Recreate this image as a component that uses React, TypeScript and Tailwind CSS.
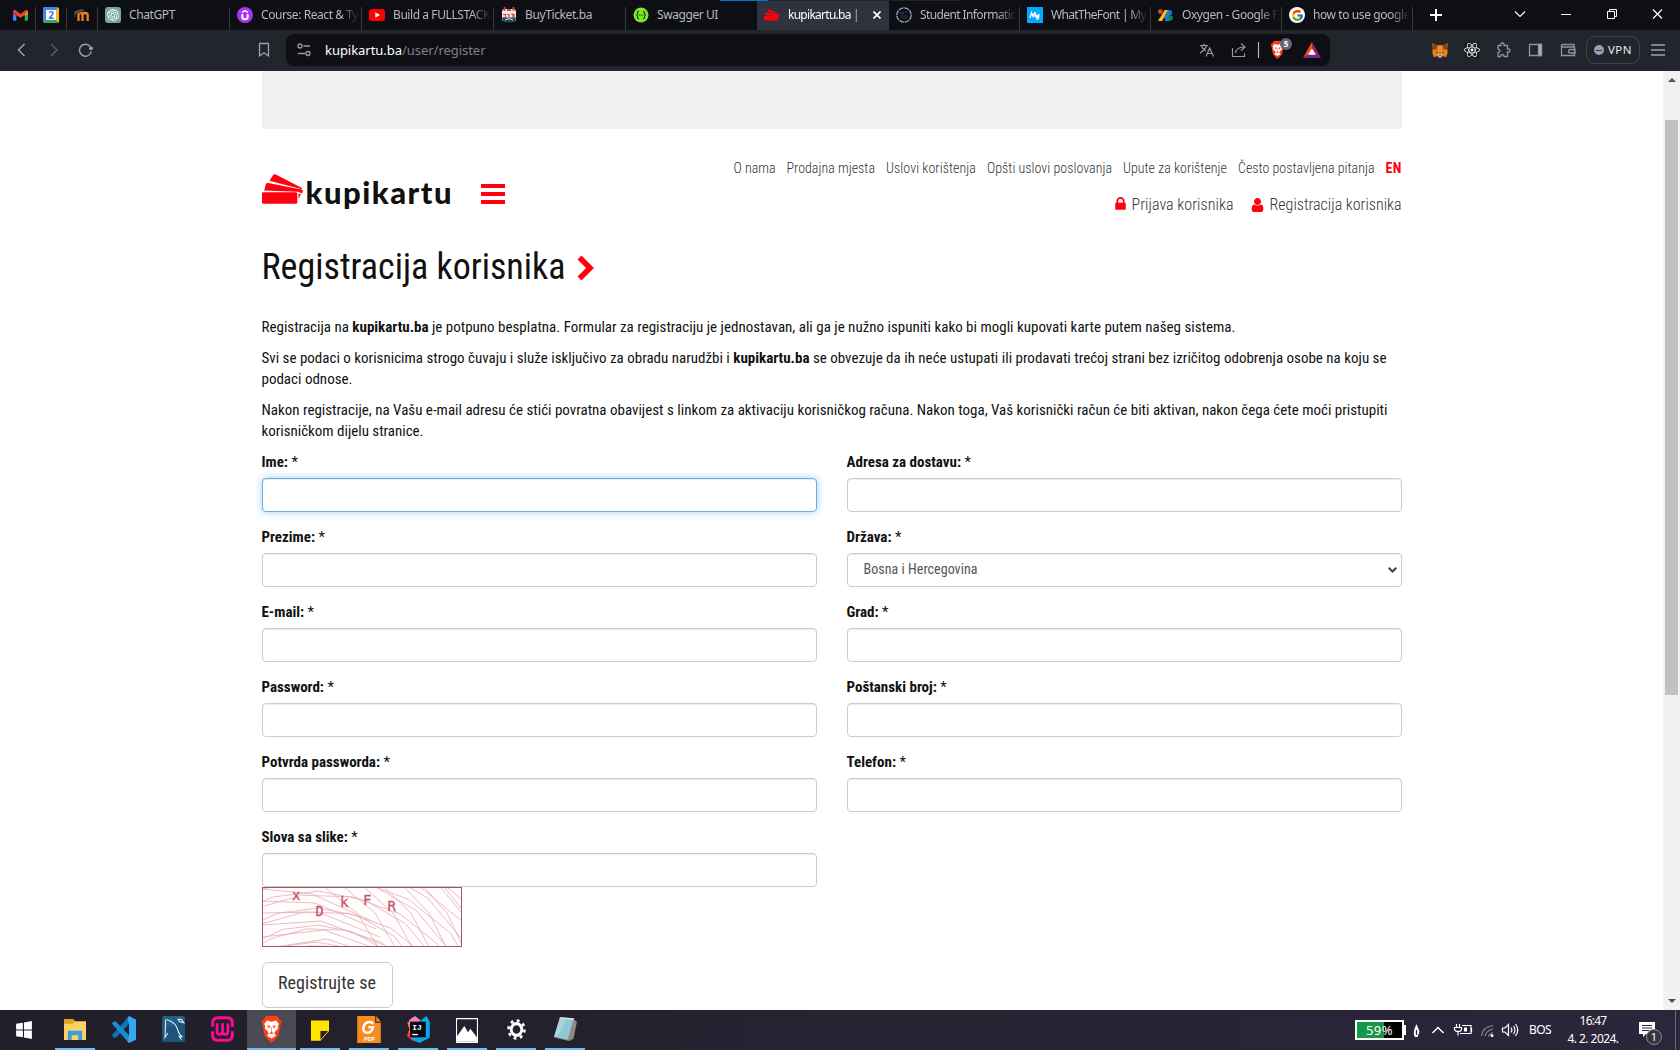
import React, { useLayoutEffect, useRef, useState } from "react";
import { SiOpenai } from "react-icons/si";
import { FcGoogle } from "react-icons/fc";
import { FaReact } from "react-icons/fa";

const UI = "font-['Noto_Sans','Open_Sans',sans-serif]";
const PAGE = "font-['Roboto_Condensed','Roboto',sans-serif] [font-stretch:75%]";

/** Single line of text whose tracking is adjusted so that it spans `w` pixels. */
function Fit({ w, className = "", children }: { w: number; className?: string; children: React.ReactNode }) {
  const ref = useRef<HTMLSpanElement>(null);
  const [ls, setLs] = useState(0);
  useLayoutEffect(() => {
    const el = ref.current!;
    const n = (el.textContent || "").length;
    setLs((w - el.getBoundingClientRect().width) / n);
  }, []);
  return (
    <span ref={ref} className={"inline-block whitespace-pre " + className} style={{ letterSpacing: ls }}>
      {children}
    </span>
  );
}

function TicketMark({ className = "" }: { className?: string }) {
  return (
    <svg viewBox="0 0 41 31" className={className} fill="#ff0011">
      <path d="M11 1.200q1-1.600 2.800-.8L39 13.400q1.200.7.8 1.800L9.200 7.200 7.500 6.800z" />
      <path d="M3.800 10.300q.5-1.700 2.300-1.200L39.500 15.400q1.700.6 1.300 2L40 19.500l-4-1.700L2.200 16.400z" />
      <path d="M0 19.500q0-1.200 1.300-1.200h32.500q1.500.1 1.500 1.500v8.400q0 1.600-1.600 1.600H1.500Q0 29.800 0 28.300z" />
      <path d="M36.500 19.500l2.300.8-2.200 5z" />
    </svg>
  );
}

function BraveLion({ className = "" }: { className?: string }) {
  return (
    <svg viewBox="0 0 18 24" className={className}>
      <path d="M4 0h10l2 3 2 1-1 4-2 10-6 6-6-6L1 8 0 4l2-1z" fill="#fa3f17" />
      <path d="M9 5l4-1 2.500 3-1 2 .5 2-3 3-.5 1.500 1.500 2L9 20l-4-2.500 1.500-2L6 14l-3-3 .5-2-1-2L5 4z" fill="#fff" />
      <path d="M5.500 8.500l2.500 1-1.500 1zM12.500 8.500l-2.500 1 1.500 1zM9 10v4l-1.500 1.500h3L9 14" fill="#fa3f17" stroke="#fa3f17" strokeWidth=".5" />
    </svg>
  );
}

function Gmail() {
  return (
    <svg viewBox="0 0 16 12" className="w-[15px] h-[12px]">
      <path d="M0 2v9q0 1 1 1h2.500V4z" fill="#4285f4" />
      <path d="M16 2v9q0 1-1 1h-2.500V4z" fill="#34a853" />
      <path d="M0 1.500L3.500 4v3L0 4.500z" fill="#c5221f" />
      <path d="M16 1.500L12.500 4v3L16 4.500z" fill="#fbbc04" />
      <path d="M0 2Q1 0 2.500.7L8 5l5.500-4.300Q15 0 16 2l-3.500 4L8 9 3.500 6z" fill="#ea4335" />
    </svg>
  );
}

function Calendar() {
  return (
    <span className="w-4 h-4 bg-[#fbbc04] border-t-[3px] border-t-[#4285f4] border-l-[3px] border-l-[#4285f4] border-b-[3px] border-b-[#34a853] border-r-[3px] border-r-[#fbbc04] rounded-[2px] flex">
      <span className={"bg-white flex-1 text-[10px] leading-[10px] font-bold text-[#3b78e7] text-center " + UI}>2</span>
    </span>
  );
}

function Moodle() {
  return (
    <svg viewBox="0 0 17 14" className="w-[17px] h-[14px]" fill="none">
      <path d="M4.500 13V7q0-2 2-2t2 2v6M8.500 7q0-2 2.500-2t2.700 2.200V13" stroke="#f47f20" strokeWidth="2.300" />
      <path d="M0 3.500L7 1l4 1-5 3-5 1.500z" fill="#4d4a48" />
      <path d="M1 4v5" stroke="#4d4a48" />
    </svg>
  );
}

function OpenAi() {
  return (
    <span className="w-4 h-4 rounded-[3px] bg-[#75a99c] text-white flex items-center justify-center">
      <SiOpenai size={12} />
    </span>
  );
}

function Udemy() {
  return (
    <svg viewBox="0 0 16 16" className="w-4 h-4">
      <circle cx="8" cy="8" r="8" fill="#a435f0" />
      <path d="M5.300 7v3q0 2.300 2.700 2.300t2.700-2.300V7" stroke="#fff" strokeWidth="1.900" fill="none" />
      <path d="M5 5.300L8 3.500l3 1.800" stroke="#fff" strokeWidth="1.500" fill="none" />
    </svg>
  );
}

function YouTube() {
  return (
    <svg viewBox="0 0 16 12" className="w-4 h-3">
      <rect width="16" height="12" rx="3" fill="#f00" />
      <path d="M6.300 3.300v5.400L11 6z" fill="#fff" />
    </svg>
  );
}

function BuyTicket() {
  return (
    <svg viewBox="0 0 16 16" className="w-4 h-4">
      <rect x="1" y="2" width="14" height="12.500" rx="3" fill="#f3e9e6" />
      <path d="M1 10.500h14l-1 3.500q-6 3-12 0z" fill="#174763" />
      <path d="M3.500 0v4M12.500 0v4M6 3h4" stroke="#d8443a" strokeWidth="1.800" />
      <path d="M2 7.500h2.500v3H2M6 7.500h2v3M10 7h2v3.500M13 7v3" stroke="#d8443a" strokeWidth="1.200" fill="none" />
      <path d="M4 13q4-3 8 0" stroke="#f3e9e6" fill="none" />
    </svg>
  );
}

function Swagger() {
  return (
    <svg viewBox="0 0 16 16" className="w-4 h-4">
      <circle cx="8" cy="8" r="7.500" fill="#7ee529" />
      <path d="M6 4.200q-1.600 0-1.400 1.800 0 1.800-1.300 2 1.300.2 1.300 2-.2 1.800 1.400 1.800M10 4.200q1.600 0 1.400 1.800 0 1.800 1.300 2-1.300.2-1.300 2 .2 1.800-1.400 1.800" stroke="#1d3d12" strokeWidth="1.100" fill="none" />
      <path d="M5.800 8h4.600" stroke="#1d3d12" strokeWidth="1.200" strokeDasharray="1.200 .5" />
    </svg>
  );
}

function StudentInfo() {
  return (
    <svg viewBox="0 0 16 16" className="w-4 h-4" fill="none">
      <circle cx="8" cy="8" r="7.200" stroke="#a3a6aa" strokeWidth="1.300" strokeDasharray="4.900 .75" />
      <path d="M4.500 5v2M7 5v2M9 5h2" stroke="#1d4c86" strokeWidth="1.200" />
      <path d="M4 9h8M5 11h6" stroke="#24425f" strokeWidth=".8" />
    </svg>
  );
}

function WhatTheFont() {
  return (
    <svg viewBox="0 0 16 16" className="w-4 h-4">
      <rect width="16" height="16" fill="#00a8ff" />
      <path d="M3 11L4.500 5.500 6 9.500 8 5l.3 5.500M9.500 7.500l.3 3 2.200-3.300-.5 3.800q-.5 1.500-1.800 1.200" stroke="#fff" strokeWidth="1.300" fill="none" />
    </svg>
  );
}

function GoogleFonts() {
  return (
    <svg viewBox="0 0 16 13" className="w-4 h-[13px]">
      <circle cx="2.300" cy="2.600" r="2.300" fill="#ea4335" />
      <path d="M6.500 1H10v2L4 12H0z" fill="#fbbc04" />
      <path d="M10 1h1v11h-4V6z" fill="#1a73e8" />
      <path d="M11 1q3.200 0 3.200 2.600T11 6.300z" fill="#1a73e8" />
      <path d="M11 6q4 0 4 3t-4 3z" fill="#188038" />
    </svg>
  );
}

function Tab({ icon, text, w, active = false, fade = false, className }: { icon: React.ReactNode; text: string; w: number; active?: boolean; fade?: boolean; className: string }) {
  return (
    <div className={"relative shrink-0 flex items-center h-[30px] pl-[7px] " + className + (active ? " bg-[#2f333d]" : "")}>
      <span className="w-4 h-4 flex items-center justify-center shrink-0">{icon}</span>
      <span className={"ml-2 flex-1 overflow-hidden h-[18px] text-[12px] leading-[18px] " + UI + (active ? " text-white" : " text-[#b8b9bb]") + (fade ? " [mask-image:linear-gradient(to_right,#000_80%,transparent_100%)]" : "")}>
        <Fit w={w}>{text}</Fit>
      </span>
      {active ? (
        <svg viewBox="0 0 8 8" className="w-2 h-2 mr-2 ml-2 shrink-0" stroke="#fff" strokeWidth="1.700"><path d="M.5.5l7 7M7.500.5l-7 7" /></svg>
      ) : (
        <span className="w-0.5 shrink-0" />
      )}
    </div>
  );
}

const Sep = () => <span className="w-px h-[23px] mt-[7px] bg-[#38393e] shrink-0" />;

function TabStrip() {
  return (
    <div className="relative flex h-[30px] bg-[#0e0f14]">
      <div className="absolute left-[720px] top-0 w-[48px] h-px bg-[#0078d7] z-10" />
      <div className="absolute left-[768px] top-0 w-[193px] h-px bg-[#222325] z-10" />
      <span className="w-[35px] pl-[5px] flex items-center justify-center shrink-0"><Gmail /></span><Sep />
      <span className="w-[30px] flex items-center justify-center shrink-0"><Calendar /></span><Sep />
      <span className="w-[30px] flex items-center justify-center shrink-0"><Moodle /></span><Sep />
      <Tab className="w-[131px]" icon={<OpenAi />} text="ChatGPT" w={46} /><Sep />
      <Tab className="w-[131px]" icon={<Udemy />} text="Course: React & Ty" w={97} fade /><Sep />
      <Tab className="w-[131px]" icon={<YouTube />} text="Build a FULLSTACK" w={97} fade /><Sep />
      <Tab className="w-[131px]" icon={<BuyTicket />} text="BuyTicket.ba" w={67} /><Sep />
      <Tab className="w-[131px]" icon={<Swagger />} text="Swagger UI" w={61} />
      <Tab className="w-[132px]" icon={<TicketMark className="w-4 h-3" />} text="kupikartu.ba |" w={71} active fade />
      <Tab className="w-[130px]" icon={<StudentInfo />} text="Student Informatio" w={97} fade /><Sep />
      <Tab className="w-[130px]" icon={<WhatTheFont />} text="WhatTheFont | My" w={95} fade /><Sep />
      <Tab className="w-[130px]" icon={<GoogleFonts />} text="Oxygen - Google F" w={96} fade /><Sep />
      <Tab className="w-[130px]" icon={<span className="w-4 h-4 rounded-full bg-white flex items-center justify-center"><FcGoogle size={13} /></span>} text="how to use google" w={97} fade /><Sep />
      <div className="flex-1 flex items-center justify-end">
        <svg viewBox="0 0 268 30" className="w-[268px] h-[30px] shrink-0" fill="none" stroke="#fff">
          <path d="M17 15h12M23 9v12" strokeWidth="2" />
          <path d="M102 11.500l5 5 5-5" strokeWidth="1.100" />
          <path d="M148 14.500h10" />
          <path d="M194.500 11.500h7v7h-7zM196.500 11.500v-2h7v7h-2" />
          <path d="M240 9.500l9 9M249 9.500l-9 9" strokeWidth="1.200" />
        </svg>
      </div>
    </div>
  );
}

function MetaMask() {
  return (
    <svg viewBox="0 0 16 15" className="w-4 h-[15px]">
      <path d="M0 0l5.500 2.500h5L16 0l-.8 6 .5 3.500-1.400 4.500-4-.8L8.500 15h-1l-1.800-1.800-4 .8L.3 9.500.8 6z" fill="#e8821e" />
      <path d="M0 0l5.500 2.500L4 7 .8 6zM16 0l-5.500 2.500L12 7l3.200-1z" fill="#8a4018" />
      <path d="M5.500 2.500h5L9.500 9h-3z" fill="#f6891f" />
      <path d="M5.700 12l2.300-.7 2.300.7-1.300 2.200H7z" fill="#dcd3cb" />
      <path d="M4 8.500l2 .8-2 .5zM12 8.500l-2 .8 2 .5zM7 12.200h2v1H7z" fill="#233447" />
    </svg>
  );
}

function Toolbar() {
  return (
    <div className="flex items-center h-[41px] bg-[#22252c] pt-px">
      <svg viewBox="0 0 286 40" className="w-[286px] h-10 shrink-0" fill="none" stroke="#9ba2ac" strokeWidth="1.300">
        <path d="M24.500 13l-6 6 6 6" strokeWidth="1.500" />
        <path d="M51 13l6 6-6 6" stroke="#555a63" strokeWidth="1.500" />
        <path d="M90.300 15.600a6 6 0 1 0 1 5" strokeWidth="1.500" />
        <circle cx="91" cy="17.300" r="1.900" fill="#9ba2ac" stroke="none" />
        <path d="M259.500 12.500h9v12.500l-4.500-3.300-4.500 3.300z" />
      </svg>
      <div className="w-[1044px] h-8 bg-[#0e0f14] rounded-lg flex items-center mb-[3px] shrink-0">
        <svg viewBox="0 0 39 32" className="w-[39px] h-8" fill="none" stroke="#9a9ca0" strokeWidth="1.300">
          <circle cx="14" cy="12" r="2" /><path d="M17.500 12H24M12 19.500h7" /><circle cx="22" cy="19.500" r="2" />
        </svg>
        <span className={"flex-1 text-[13px] leading-5 text-[#7f8185] " + UI}>
          <Fit w={160.500}><span className="text-white">kupikartu.ba</span>/user/register</Fit>
        </span>
        <svg viewBox="0 0 140 32" className="w-[140px] h-8" fill="none" stroke="#989a9f" strokeWidth="1.200">
          <path d="M9 11.500h8M13 9.500v2M15.500 11.500q-1 4-6.500 7.500M10.500 12q1 3 4.500 5M15 22.500l3.700-8.500 3.800 8.500M16.300 19.500h5" />
          <path d="M41.500 14v8.500h12v-3M44.500 19q.3-5.500 8.500-6M50 9.500l4 3.500-4 3.500" />
          <path d="M67.500 8v16" stroke="#b5b6b9" />
        </svg>
        <span className="-ml-[61px] flex items-center">
          <span className="relative w-[15px] h-[18px]">
            <BraveLion className="w-[15px] h-[18px]" />
            <span className={"absolute -top-[3px] left-[10px] w-3 h-3 rounded-full bg-[#646876] text-[8px] leading-3 font-bold text-white text-center " + UI}>5</span>
          </span>
          <svg viewBox="0 0 18 16" className="w-[18px] h-4 ml-[18px] mr-[9px]">
            <path d="M9 0L0 16l9-5.500z" fill="#ff4724" /><path d="M9 0l9 16-9-5.500z" fill="#9e1f63" /><path d="M0 16h18l-9-5.500z" fill="#662d91" /><path d="M9 6.500l-4 6.200h8z" fill="#fff" />
          </svg>
        </span>
      </div>
      <div className="flex items-center mb-[2px] ml-[102px]">
        <MetaMask />
        <span className="ml-4 w-4 h-4 bg-[#1d1f23] text-white"><FaReact size={16} /></span>
        <svg viewBox="0 0 88 20" className="w-[88px] h-5 ml-3" fill="none" stroke="#8d949e" strokeWidth="1.300">
          <path d="M6 5.500h3q-.5-2.500 1.500-2.500T12 5.500h3.500v3.500q2.500-.5 2.500 1.500t-2.500 1.500v4.500H12q0-2-1.700-2t-1.800 2H6v-4q2 0 2-1.700T6 9z" />
          <path d="M37.500 4.500h12v11h-12z" /><path d="M46.500 4.500h3v11h-3z" fill="#b3b9c2" />
          <path d="M82 7V4.500H70q-1.200.8 0 2.500h12.500v8.500h-13V5.500M83 9.500h-5q-1.500 0-1.500 1.700T78 13h5z" />
        </svg>
        <span className={"ml-[6px] w-[54px] h-7 rounded-[9px] border border-[#3f434d] flex items-center pl-[7px] text-[11.500px] text-[#e8e8ec] " + UI}>
          <span className="w-[10px] h-[10px] rounded-full bg-[#9a9bb8] flex items-center justify-center mr-1"><span className="w-1.5 h-px bg-[#333545]" /></span>
          <Fit w={24}>VPN</Fit>
        </span>
        <svg viewBox="0 0 14 12" className="w-[14px] h-3 ml-[11px]" stroke="#9ba2ac" strokeWidth="1.300"><path d="M0 1h14M0 6h14M0 11h14" /></svg>
      </div>
    </div>
  );
}

function Field({ label, focus = false, children }: { label: string; focus?: boolean; children?: React.ReactNode }) {
  return (
    <div className="h-[75px]">
      <div className="h-[26px] text-[15px] leading-[21px] text-[#111]"><b>{label}:</b> *</div>
      <div className={"h-[34px] rounded border bg-white flex items-center justify-between " + (focus ? "border-[#66afe9] shadow-[inset_0_1px_1px_rgba(0,0,0,.075),0_0_8px_rgba(102,175,233,.6)]" : "border-[#ccc] shadow-[inset_0_1px_1px_rgba(0,0,0,.075)]")}>
        {children}
      </div>
    </div>
  );
}

function Captcha() {
  const lines: string[] = [];
  /* Polygonal arcs around a few centres below the picture. */
  const arc = (cx: number, cy: number, rx: number, ry: number, start: number) => {
    let d = "";
    for (let k = 0; k < 9; k++) {
      const a = ((start + k * 20) * Math.PI) / 180;
      d += (k ? "L" : "M") + (cx - rx * Math.cos(a)).toFixed(1) + " " + (cy - ry * Math.sin(a)).toFixed(1);
    }
    return d;
  };
  for (let i = 0; i < 10; i++) {
    lines.push(arc(52, 130, 85 + i * 17, 75 + i * 17, 12));
    lines.push(arc(60, 136, 95 + i * 17, 78 + i * 17, 2));
  }
  for (let i = 0; i < 7; i++) lines.push(`M0 ${2 + i * 12}L${50 + i * 3} ${7 + i * 9}L${110 + i * 4} ${34 + i * 8}`);
  for (let i = 0; i < 7; i++) lines.push(`M${62 + i * 20} 0L${95 + i * 18} 26L${116 + i * 17} 60`);
  return (
    <svg viewBox="0 0 200 60" className="block w-[200px] h-[60px]" fill="none">
      <rect width="200" height="60" fill="#fffdfd" />
      <path d={lines.join("")} stroke="#e6acb4" strokeWidth=".8" />
      <rect x=".5" y=".5" width="199" height="59" stroke="#965a60" />
      <g fill="#c25768" fontFamily="DejaVu Sans Mono, monospace" fontSize="14" stroke="#c25768" strokeWidth=".3">
        <text x="30" y="13">x</text><text x="53.500" y="29" fontSize="13.500">D</text><text x="78" y="20">k</text><text x="101" y="18">F</text><text x="125.500" y="24">R</text>
      </g>
    </svg>
  );
}

function Page() {
  return (
    <div className={"relative h-[939px] bg-white text-[#111] overflow-hidden " + PAGE}>
      <div className="w-[1140px] ml-[261.5px]">
        <div className="h-[58px] bg-[#f1f1f1]" />
        <div className="h-[92px] flex justify-between">
          <div className="flex pt-[45px]">
            <TicketMark className="w-[41px] h-[31px]" />
            <span className="ml-[3px] w-[147px] text-[31px] leading-[36px] font-black font-['Lato',sans-serif] [font-stretch:100%]"><Fit w={147.500}>kupikartu</Fit></span>
            <svg viewBox="0 0 24 20" className="w-6 h-5 ml-7 mt-[10px]" fill="#ff0011"><path d="M0 0h24v4H0zM0 8h24v4H0zM0 16h24v4H0z" /></svg>
          </div>
          <div className="pt-[29px] text-right text-[#333] font-light">
            <div className="flex justify-end gap-[11px] text-[14px] leading-5">
              <Fit w={42}>O nama</Fit><Fit w={88.500}>Prodajna mjesta</Fit><Fit w={90}>Uslovi korištenja</Fit><Fit w={125}>Opšti uslovi poslovanja</Fit><Fit w={104}>Upute za korištenje</Fit><Fit w={136.500}>Često postavljena pitanja</Fit>
              <Fit w={16} className="font-bold text-[#ff0011]">EN</Fit>
            </div>
            <div className="flex justify-end items-center mt-[16px] text-[16px] leading-[22px]">
              <svg viewBox="320 128 1152 1536" className="w-[11px] h-[14px] mr-[5px] mb-0.5" fill="#ff0011"><path d="M640 768h512v-192q0-106-75-181t-181-75-181 75-75 181v192zm832 96v576q0 40-28 68t-68 28h-960q-40 0-68-28t-28-68v-576q0-40 28-68t68-28h32v-192q0-184 132-316t316-132 316 132 132 316v192h32q40 0 68 28t28 68z" /></svg>
              <Fit w={102}>Prijava korisnika</Fit>
              <svg viewBox="256 128 1280 1536" className="w-[13px] h-[14px] ml-[18px] mr-[5px]" fill="#ff0011"><path d="M1536 1399q0 109-62.500 187t-150.500 78h-854q-88 0-150.500-78t-62.500-187q0-85 8.500-160.500t31.500-152 58.500-131 94-89 134.500-34.500q131 128 313 128t313-128q76 0 134.500 34.500t94 89 58.500 131 31.500 152 8.500 160.500zm-256-887q0 159-112.500 271.500t-271.500 112.500-271.500-112.500-112.500-271.500 112.500-271.500 271.500-112.500 271.500 112.500 112.500 271.500z" /></svg>
              <Fit w={132}>Registracija korisnika</Fit>
            </div>
          </div>
        </div>
        <h1 className="mt-[26px] flex items-center text-[36px] leading-[40px]">
          <Fit w={304}>Registracija korisnika</Fit>
          <svg viewBox="0 0 17 26" className="w-[17px] h-[26px] ml-[11px] mt-[1px]" fill="none" stroke="#ff0011" strokeWidth="5.600"><path d="M2.500 2.500L13 13 2.500 23.500" /></svg>
        </h1>
        <div className="mt-[30px] text-[15px] leading-[21px]">
          <p className="mb-[10px]"><Fit w={974}>Registracija na <b>kupikartu.ba</b> je potpuno besplatna. Formular za registraciju je jednostavan, ali ga je nužno ispuniti kako bi mogli kupovati karte putem našeg sistema.</Fit></p>
          <p className="mb-[10px]"><Fit w={1125}>Svi se podaci o korisnicima strogo čuvaju i služe isključivo za obradu narudžbi i <b>kupikartu.ba</b> se obvezuje da ih neće ustupati ili prodavati trećoj strani bez izričitog odobrenja osobe na koju se</Fit><br /><Fit w={91}>podaci odnose.</Fit></p>
          <p className="mb-[10px]"><Fit w={1126}>Nakon registracije, na Vašu e-mail adresu će stići povratna obavijest s linkom za aktivaciju korisničkog računa. Nakon toga, Vaš korisnički račun će biti aktivan, nakon čega ćete moći pristupiti</Fit><br /><Fit w={162}>korisničkom dijelu stranice.</Fit></p>
        </div>
        <div className="grid grid-cols-2 gap-x-[30px]">
          <div>
            <Field label="Ime" focus /><Field label="Prezime" /><Field label="E-mail" /><Field label="Password" /><Field label="Potvrda passworda" />
            <div className="h-[60px]"><Field label="Slova sa slike" /></div>
            <Captcha />
            <button className="mt-[15px] w-[131px] h-[46px] border border-[#ccc] rounded-md text-[18px] leading-6 text-[#333] pb-1"><Fit w={98}>Registrujte se</Fit></button>
          </div>
          <div>
            <Field label="Adresa za dostavu" />
            <Field label="Država">
              <span className="pl-4 pb-0.5 text-[14px] leading-5 text-[#555]"><Fit w={114}>Bosna i Hercegovina</Fit></span>
              <svg viewBox="0 0 9 6" className="w-[9px] h-1.5 mr-1" fill="none" stroke="#444" strokeWidth="2"><path d="M.7.7l3.800 3.800L8.300.7" /></svg>
            </Field>
            <Field label="Grad" /><Field label="Poštanski broj" /><Field label="Telefon" />
          </div>
        </div>
      </div>
      <div className="absolute right-0 top-0 w-[17px] h-full bg-[#f1f1f1] flex flex-col items-center">
        <svg viewBox="0 0 8 4" className="w-2 h-1 mt-[7px]" fill="#505050"><path d="M0 4l4-4 4 4z" /></svg>
        <div className="mt-[38px] w-[13px] h-[575px] bg-[#c1c1c1]" />
        <svg viewBox="0 0 8 4" className="w-2 h-1 mt-auto mb-[7px]" fill="#505050"><path d="M0 0l4 4 4-4z" /></svg>
      </div>
    </div>
  );
}

function Task({ children, active = false, open = false }: { children: React.ReactNode; active?: boolean; open?: boolean }) {
  return (
    <div className={"relative w-[49px] h-10 flex items-center justify-center shrink-0 pb-0.5" + (active ? " bg-[#4b4a52]" : "")}>
      {children}
      {(open || active) && <span className={"absolute bottom-0 h-0.5 bg-[#76b9ed] " + (active ? "inset-x-0" : "left-1 w-10")} />}
    </div>
  );
}

function Taskbar() {
  return (
    <div className="h-10 flex bg-gradient-to-r from-[#211f29] to-[#2b263b] text-white">
      <div className="w-[50.500px] pr-[3px] flex items-center justify-center shrink-0">
        <svg viewBox="0 0 14 16" className="w-4 h-[18px]" fill="#fff"><path d="M0 2.500L6 1.500v6H0zM7 1.400L14 0v7.500H7zM0 8.500h6v6L0 13.500zM7 8.500h7V16l-7-1.300z" /></svg>
      </div>
      <Task open>
        <svg viewBox="0 0 20 18" className="w-[22px] h-[21px]" preserveAspectRatio="none"><path d="M0 0h8l2 2h10v16H0z" fill="#fad165" /><path d="M0 0h8l2 2-2 2H0z" fill="#e0a11b" /><path d="M3.500 18v-8h13v8h-3.500v-4h-6v4z" fill="#3f9be0" /></svg>
      </Task>
      <Task>
        <svg viewBox="0 0 24 24" className="w-6 h-[27px]" preserveAspectRatio="none"><path d="M17 0v7L4 19l-1.500.5L0 17.500 1 16z" fill="#0a75bd" /><path d="M17 24v-7L4 5l-1.500-.5L0 6.500 1 8z" fill="#1a8ad4" /><path d="M17 0l7 3v18l-7 3-1.500-1.500L17 17V7l-1.500-5.500z" fill="#35a6f2" /></svg>
      </Task>
      <Task>
        <svg viewBox="0 0 20 23" className="w-[23px] h-[26px]"><rect width="20" height="23" rx="1.500" fill="#235f86" /><path d="M0 13L20 4v17.500q0 1.500-1.500 1.500h-17Q0 23 0 21.500z" fill="#1e547a" /><path d="M5 15L2.500 19 3 6Q2 2 6 4q6 2 8 9 .5 3 4 5.500l-3-.5 2 3M14 3l1.500 2L19 6l-2-3z" stroke="#dce8ef" fill="none" /></svg>
      </Task>
      <Task>
        <svg viewBox="0 0 20 23" className="w-[23px] h-[26px]" fill="none" stroke="#ff0a96"><path d="M1.300 9.500V6Q1.300 1.500 6 1.500h8q4.700 0 4.700 4.500v3.500M1.300 13.500V17q0 4.500 4.700 4.500h8q4.700 0 4.700-4.500v-3.500" strokeWidth="2.600" /><path d="M5.200 6.500v7.300q0 2.500 2.400 2.500t2.400-2.500V6.500M10 13.800q0 2.500 2.400 2.500t2.400-2.500V6.500" strokeWidth="2.400" /></svg>
      </Task>
      <Task active><BraveLion className="w-[21px] h-[27px]" /></Task>
      <Task open>
        <svg viewBox="0 0 16 18" className="w-[18px] h-[21px] mt-0.5"><path d="M0 0h16v9l-8 9H0z" fill="#ffe600" /><path d="M8 9h8l-8 9z" fill="#23222c" stroke="#ffe600" strokeWidth=".8" /></svg>
      </Task>
      <Task open>
        <svg viewBox="0 0 21 24" className="w-6 h-[27px]"><path d="M0 0h16v6h5v18H0z" fill="#f68b1f" /><path d="M17 0l4 5h-4z" fill="#f68b1f" /><path d="M14.500 6.500q-6-3-8.500 2-2 6 3 6.500 4 0 5-5h-4" stroke="#fff" strokeWidth="2.200" fill="none" /><text x="6" y="22.500" fontSize="5" fontWeight="700" fontFamily="Liberation Sans" fill="#fff">PDF</text></svg>
      </Task>
      <Task open>
        <svg viewBox="0 0 20 24" className="w-[23px] h-[27px]"><path d="M0 6l7-5 4 4-3 17-8-4 2-6z" fill="#fc7c35" /><path d="M2 3l5-3 5 4-5 4-6-1z" fill="#f97dc0" /><path d="M12 4l5-4 3 5v14l-9 5-7-3z" fill="#08a9f4" /><path d="M1 13l5 10-6-5z" fill="#fe315d" /><path d="M2.500 5h14v14h-14z" fill="#0b0910" /><path d="M4.500 16.500h5" stroke="#fff" strokeWidth="1.200" /><text x="4.500" y="12" fontSize="7" fontWeight="700" fontFamily="Liberation Mono" fill="#fff">IJ</text></svg>
      </Task>
      <Task open>
        <svg viewBox="0 0 20 22" className="w-[22px] h-[25px] mt-0.5" preserveAspectRatio="none"><path d="M.5.5h19v21H.5z" fill="none" stroke="#fff" /><path d="M1 16l6.500-9L11 12.500l2-3 6 7.500v4H1z" fill="#fff" /></svg>
        <span className="absolute bottom-0 left-[36px] w-2 h-0.5 bg-[#4c7ba4]" />
      </Task>
      <Task open>
        <svg viewBox="0 0 18 18" className="w-[19px] h-[21px]" preserveAspectRatio="none" fill="none" stroke="#fff"><circle cx="9" cy="9" r="5" strokeWidth="2.700" /><circle cx="9" cy="9" r="7.600" strokeWidth="2.400" strokeDasharray="2.700 3.270" /></svg>
      </Task>
      <Task open>
        <svg viewBox="0 0 20 21" className="w-[23px] h-6"><path d="M5 1l12 1 3 2-3 15-4 2-13-3z" fill="#8b8980" /><path d="M5 1l12 1-5 18-12-3z" fill="#8fc9d8" /><path d="M5 1l6 .5L3 17.500l-3-.5z" fill="#b5e0e8" opacity=".6" /><path d="M5 .8l12.500 1" stroke="#ddd" strokeWidth="1.500" /></svg>
      </Task>

      <div className={"ml-auto flex items-center " + UI}>
        <div className="flex items-center mr-[6px]">
          <div className="relative w-[49px] h-5 border-2 border-white bg-[linear-gradient(to_right,#159947_59%,#000_59%)] flex items-center justify-center text-[13px] leading-4"><Fit w={27}>59%</Fit></div>
          <span className="w-0.5 h-2.5 bg-white" />
        </div>
        <svg viewBox="0 0 114 40" className="w-[114px] h-10" fill="none" stroke="#fff" strokeWidth="1.200">
          <path d="M4.500 14l3 7.500-2 5.500H3q-3-4 1.500-13z" fill="#fff" stroke="none" /><path d="M4.500 20v5" stroke="#2a2538" />
          <path d="M20.500 23l5.500-5.500 5.500 5.500" strokeWidth="1.500" />
          <path d="M50 15.500h9v8h-11M59.500 18v4M44.500 14v3M47.500 14v3M42.500 17.500h7v1.500q0 2.500-3.500 2.500t-3.500-2.500zM46 21.500v4" /><path d="M52 17.500h3v4h-3z" fill="#fff" stroke="none" />
          <path d="M69.500 26q1-9 11.500-10.500M73 26.500q1-6 8-7.500M76.500 26.500q1-3 4.500-4" stroke="#85818f" /><circle cx="80" cy="25.500" r="1.500" fill="#fff" stroke="none" />
          <path d="M90.500 18h2.500l3.500-3.500v11L93 22h-2.500zM99 17.500q1.800 2.500 0 5M101.500 16q3 4 0 8M103.500 14q4.500 6 0 12" />
        </svg>
        <span className="text-[12px] ml-[3px]"><Fit w={22}>BOS</Fit></span>
        <div className="ml-[16px] w-[52px] text-[12px] leading-[18px] text-center"><div><Fit w={27}>16:47</Fit></div><div><Fit w={51}>4. 2. 2024.</Fit></div></div>
        <div className="relative ml-5 w-[36px] h-10">
          <svg viewBox="0 0 16 16" className="absolute left-0 top-3 w-4 h-4"><path d="M0 0h16v12H7l-3 3v-3H0z" fill="#fff" /><path d="M3 3.500h10M3 6h10M3 8.500h7" stroke="#2a2538" /></svg>
          <span className="absolute left-[7px] top-[19px] w-4 h-4 rounded-full border border-[#8b8993] bg-[#36343f] text-[11px] leading-[14px] text-center">1</span>
        </div>
        <span className="w-px h-10 bg-[#6b6778] mr-1" />
      </div>
    </div>
  );
}

export default function App() {
  return (
    <div className="w-[1680px] h-[1050px] overflow-hidden">
      <TabStrip />
      <Toolbar />
      <Page />
      <Taskbar />
    </div>
  );
}
